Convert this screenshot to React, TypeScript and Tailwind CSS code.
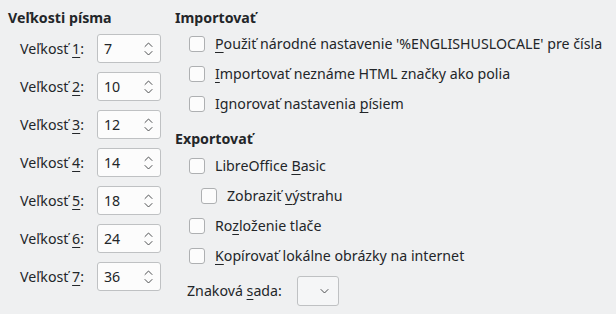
import React from "react";

const FONT = { fontFamily: '"Noto Sans", "Open Sans", sans-serif' };

const SIZES = [7, 10, 12, 14, 18, 24, 36];

function Spin({ value }: { value: number }) {
  return (
    <div className="flex h-[29px] w-[64px] items-center justify-between rounded-[3px] border border-[#bfc1c3] bg-[#fcfcfc] pl-[6px] pr-[7px]">
      <span>{value}</span>
      <svg width="9" height="16" viewBox="0 0 9 16" fill="none" stroke="#4d4f51" strokeWidth="1" strokeLinecap="round">
        <path d="M1 5.5 L4.5 2 L8 5.5" />
        <path d="M1 10.5 L4.5 14 L8 10.5" />
      </svg>
    </div>
  );
}

function Check({ children, indent }: { children: React.ReactNode; indent?: boolean }) {
  return (
    <div className={`flex h-[30px] items-center gap-[10px] ${indent ? "pl-[26px]" : "pl-[14px]"}`}>
      <div className="h-4 w-4 rounded-[3px] border border-[#aeb0b2] bg-[#fcfcfc]" />
      <span className="whitespace-nowrap">{children}</span>
    </div>
  );
}

const U = ({ children }: { children: React.ReactNode }) => (
  <span className="underline decoration-1 underline-offset-[3px]">{children}</span>
);

export default function App() {
  return (
    <div
      className="flex h-[314px] w-[616px] bg-[#eff0f1] pl-2 pt-2 text-[14.2px] leading-5 text-[#232629]"
      style={FONT}
    >
      {/* Font sizes */}
      <div className="w-[167px]">
        <h3 className="font-bold">Veľkosti písma</h3>
        <div className="mt-[6px] flex flex-col gap-[9px] pl-3">
          {SIZES.map((s, i) => (
            <div key={s} className="flex h-[29px] items-center">
              <span className="w-[77px]">
                Veľkosť <U>{i + 1}</U>:
              </span>
              <Spin value={s} />
            </div>
          ))}
        </div>
      </div>

      {/* Import / export */}
      <div className="flex-1">
        <h3 className="font-bold">Importovať</h3>
        <div className="mt-px">
          <Check>
            <U>P</U>oužiť národné nastavenie '%ENGLISHUSLOCALE' pre čísla
          </Check>
          <Check>
            <U>I</U>mportovať neznáme HTML značky ako polia
          </Check>
          <Check>
            Ignorovať nastavenia <U>p</U>ísiem
          </Check>
        </div>

        <h3 className="mt-[10px] font-bold">Exportovať</h3>
        <div className="mt-[2px]">
          <Check>
            LibreOffice <U>B</U>asic
          </Check>
          <Check indent>
            Zobraziť <U>v</U>ýstrahu
          </Check>
          <Check>
            Ro<U>z</U>loženie tlače
          </Check>
          <Check>
            <U>K</U>opírovať lokálne obrázky na internet
          </Check>
        </div>

        <div className="mt-[5px] flex h-[30px] items-center pl-3">
          <span className="w-[110px]">
            Znaková <U>s</U>ada:
          </span>
          <div className="flex h-[30px] w-[42px] items-center justify-end rounded-[3px] border border-[#bfc1c3] bg-[#f5f6f7] pr-[9px]">
            <svg width="9" height="6" viewBox="0 0 9 6" fill="none" stroke="#4d4f51" strokeWidth="1" strokeLinecap="round">
              <path d="M1 1.5 L4.5 5 L8 1.5" />
            </svg>
          </div>
        </div>
      </div>
    </div>
  );
}
